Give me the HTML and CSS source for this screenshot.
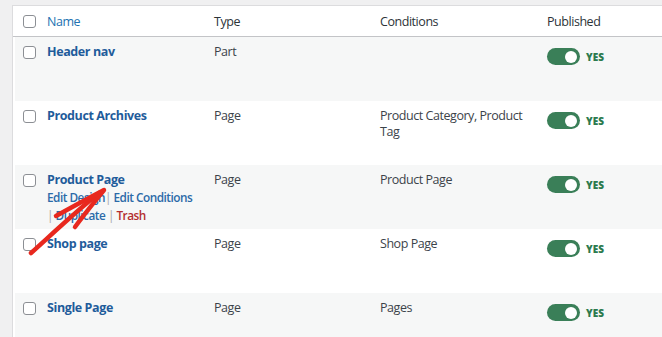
FILE: index.html
```html
<!DOCTYPE html>
<html>
<head>
<meta charset="utf-8">
<link rel="stylesheet" href="styles.css">
</head>
<body>
<div class="wrap">
  <div class="table">
    <div class="row head">
      <div class="cb-cell"><span class="cb"></span></div>
      <div class="cell"><a class="sort">Name</a></div>
      <div class="cell">Type</div>
      <div class="cell">Conditions</div>
      <div class="cell">Published</div>
    </div>
    <div class="row alt">
      <div class="cb-cell"><span class="cb"></span></div>
      <div class="cell"><a class="title">Header nav</a></div>
      <div class="cell">Part</div>
      <div class="cell"></div>
      <div class="cell pub"><span class="toggle"><span class="knob"></span></span><span class="yes">YES</span></div>
    </div>
    <div class="row">
      <div class="cb-cell"><span class="cb"></span></div>
      <div class="cell"><a class="title">Product Archives</a></div>
      <div class="cell">Page</div>
      <div class="cell cond">Product Category, Product Tag</div>
      <div class="cell pub"><span class="toggle"><span class="knob"></span></span><span class="yes">YES</span></div>
    </div>
    <div class="row alt">
      <div class="cb-cell"><span class="cb"></span></div>
      <div class="cell">
        <a class="title">Product Page</a>
        <div class="actions"><a>Edit Design</a><span class="sep">|</span> <a>Edit Conditions</a></div>
        <div class="actions"><span class="sep">|</span> <a>Duplicate</a> <span class="sep">|</span> <a class="trash">Trash</a></div>
      </div>
      <div class="cell">Page</div>
      <div class="cell">Product Page</div>
      <div class="cell pub"><span class="toggle"><span class="knob"></span></span><span class="yes">YES</span></div>
    </div>
    <div class="row">
      <div class="cb-cell"><span class="cb"></span></div>
      <div class="cell"><a class="title">Shop page</a></div>
      <div class="cell">Page</div>
      <div class="cell">Shop Page</div>
      <div class="cell pub"><span class="toggle"><span class="knob"></span></span><span class="yes">YES</span></div>
    </div>
    <div class="row alt">
      <div class="cb-cell"><span class="cb"></span></div>
      <div class="cell"><a class="title">Single Page</a></div>
      <div class="cell">Page</div>
      <div class="cell">Pages</div>
      <div class="cell pub"><span class="toggle"><span class="knob"></span></span><span class="yes">YES</span></div>
    </div>
  </div>
</div>
<svg class="arrow" width="662" height="337" viewBox="0 0 662 337">
  <path d="M31 253 C50 236 73 214 99 193" fill="none" stroke="#e8281e" stroke-width="4.5" stroke-linecap="round"/>
  <path d="M56 216 C72 207 87 199 104 190 C96 200 86 212 75 227" fill="none" stroke="#e8281e" stroke-width="4.5" stroke-linecap="round" stroke-linejoin="round"/>
</svg>
</body>
</html>
```
FILE: styles.css
```css
html, body {
  margin: 0;
  padding: 0;
}
body {
  background: #f0f0f1;
  width: 662px;
  height: 337px;
  overflow: hidden;
  position: relative;
  font-family: "Open Sans", "Noto Sans", sans-serif;
  color: #3c434a;
  font-size: 12.5px;
  letter-spacing: -0.45px;
}
.wrap {
  padding: 5px 0 0 12px;
}
.table {
  background: #fff;
  border: 1px solid #dcdcde;
  border-bottom: none;
  width: 660px;
  height: 332px;
  overflow: hidden;
}
.row {
  display: grid;
  grid-template-columns: 34px 167px 166px 167px 1fr;
  height: 64px;
  box-sizing: border-box;
  padding-top: 7px;
  line-height: 16px;
}
.row.alt {
  background: #f6f7f7;
  margin-left: 2px;
  grid-template-columns: 32px 167px 166px 167px 1fr;
}
.row.head {
  height: 31px;
  padding-top: 8px;
  border-bottom: 1px solid #c3c4c7;
  color: #2c3338;
  font-size: 12.5px;
}
.cb-cell {
  padding-left: 10px;
  padding-top: 2px;
}
.head .cb-cell {
  padding-top: 1px;
}
.alt .cb-cell {
  padding-left: 8px;
}
.cb {
  display: block;
  width: 11px;
  height: 11px;
  border: 1px solid #8c8f94;
  border-radius: 3px;
  background: #fff;
}
.sort {
  color: #2271b1;
}
.title {
  color: #1f5c9b;
  font-weight: 700;
  font-size: 12.5px;
  letter-spacing: -0.4px;
}
.cond {
  padding-right: 14px;
}
.actions {
  margin-top: 1px;
  font-size: 11.8px;
  font-weight: 600;
  line-height: 17px;
  letter-spacing: -0.5px;
}
.actions a {
  color: #2b6aa8;
}
.actions .trash {
  color: #b32d2e;
}
.sep {
  color: #a7aaad;
  font-weight: 400;
}
.pub {
  display: flex;
  align-items: center;
  gap: 6px;
  height: 17px;
  margin-top: 4px;
}
.toggle {
  display: flex;
  justify-content: flex-end;
  align-items: center;
  width: 33px;
  height: 17px;
  border-radius: 9px;
  background: #3a7f58;
  box-sizing: border-box;
  padding-right: 3px;
}
.knob {
  width: 12px;
  height: 12px;
  border-radius: 50%;
  background: #fff;
}
.yes {
  color: #2c7a4e;
  font-weight: 800;
  font-size: 10px;
  letter-spacing: 0;
}
.arrow {
  position: absolute;
  left: 0;
  top: 0;
  pointer-events: none;
}
```
